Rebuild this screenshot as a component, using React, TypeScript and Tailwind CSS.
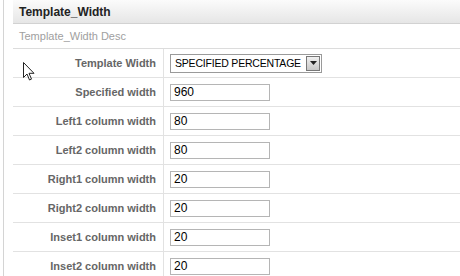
import React from 'react';

const rows = [
  { label: 'Specified width', value: '960' },
  { label: 'Left1 column width', value: '80' },
  { label: 'Left2 column width', value: '80' },
  { label: 'Right1 column width', value: '20' },
  { label: 'Right2 column width', value: '20' },
  { label: 'Inset1 column width', value: '20' },
  { label: 'Inset2 column width', value: '20' },
];

function Row({ label, children }: { label: string; children: React.ReactNode }) {
  return (
    <div className="flex h-[29px] border-b border-[#e2e2e2]">
      <div className="w-[151px] shrink-0 border-r border-[#e2e2e2] flex items-center justify-end pr-[7px] text-[11px] font-bold text-[#666]">
        {label}
      </div>
      <div className="flex items-center pl-[6px]">{children}</div>
    </div>
  );
}

export default function App() {
  return (
    <div className="relative w-[460px] h-[276px] overflow-hidden bg-white font-['Liberation_Sans',Arial,sans-serif]">
      <div className="ml-[3px] h-full border-l border-[#d4d4d4] pl-[9px]">
        <div className="h-[24px] border-b border-[#d2d2d2] bg-gradient-to-b from-[#fbfbfb] to-[#e6e6e6] flex items-center pl-[6px] text-[12px] font-bold text-[#222]">
          Template_Width
        </div>
        <div className="h-[25px] border-b border-[#dcdcdc] flex items-center pl-[6px] text-[11px] text-[#a0a0a0]">
          Template_Width Desc
        </div>
        <Row label="Template Width">
          <div className="flex items-center w-[152px] h-[19px] border border-[#9a9a9a] bg-white">
            <span className="flex-1 pl-[4px] text-[10.5px] tracking-[-0.2px] text-black leading-none whitespace-nowrap">SPECIFIED PERCENTAGE</span>
            <span className="shrink-0 w-[14px] h-[15px] mr-[1px] border border-[#777] bg-gradient-to-b from-[#f0f0f0] to-[#c8c8c8] flex items-center justify-center">
              <svg width="7" height="4" viewBox="0 0 7 4">
                <path d="M0 0h7L3.5 4z" fill="#222" />
              </svg>
            </span>
          </div>
        </Row>
        {rows.map((r) => (
          <Row key={r.label} label={r.label}>
            <div className="w-[100px] h-[17px] border border-[#b5b5b5] bg-white flex items-center pl-[3px] text-[12px] text-black leading-none">
              {r.value}
            </div>
          </Row>
        ))}
      </div>
      <svg className="absolute left-[23px] top-[62px]" width="13" height="20" viewBox="0 0 13 20">
        <path d="M0.5 0.5v15l3.5-3.5 2.5 6 2-0.9-2.5-5.8h5z" fill="white" stroke="#222" strokeWidth="1" strokeLinejoin="miter" />
      </svg>
    </div>
  );
}
